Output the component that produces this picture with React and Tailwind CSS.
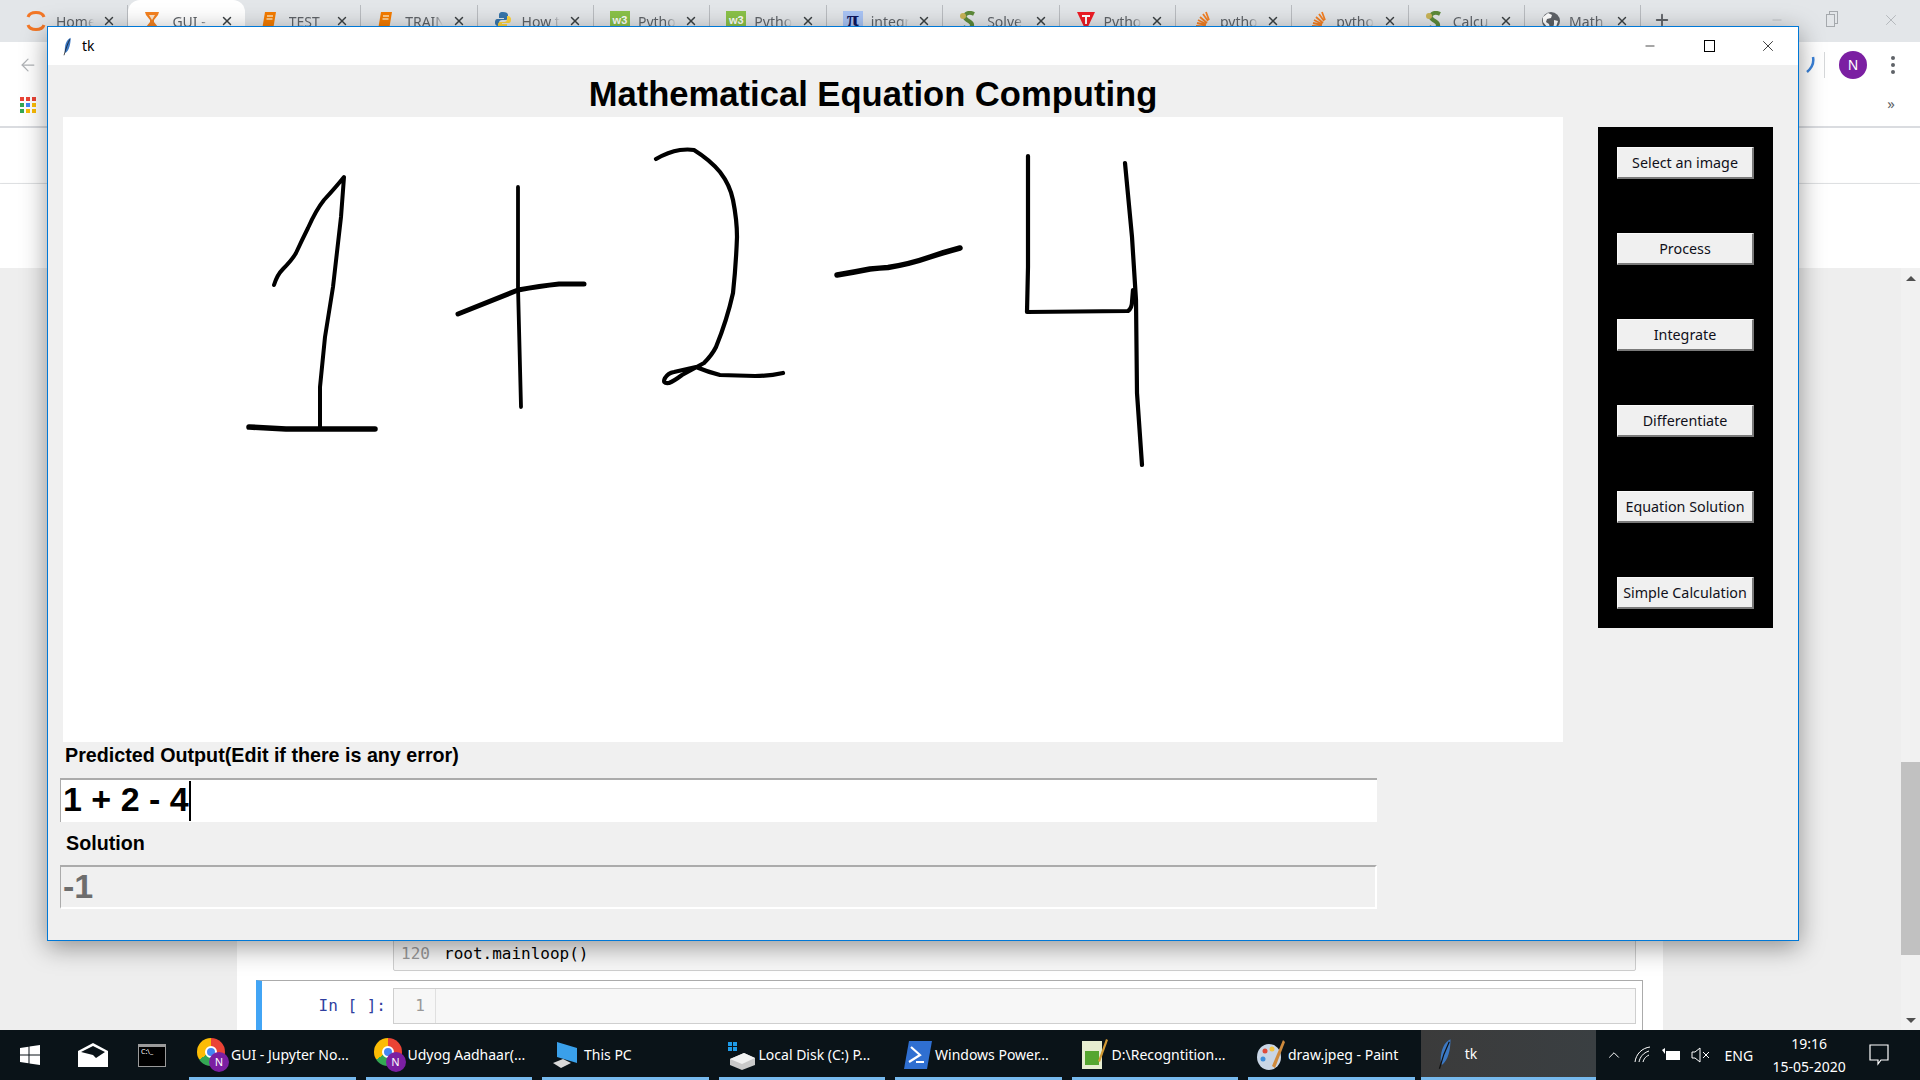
import React from "react";
import { ArrowLeft, ChevronUp, Minus, Plus, X } from "lucide-react";

const SANS = "font-['Liberation_Sans',Arial,sans-serif]";
const UI = "font-['Noto_Sans',sans-serif]";
const MONO = "font-['DejaVu_Sans_Mono',monospace]";

/* ================= FAVICONS ================= */
const JupyterIcon = () => (
  <svg width="22" height="24" viewBox="0 0 22 24" fill="none" stroke="#f37726" strokeWidth="3" className="-ml-[3px]">
    <path d="M3 8C5 2 17 2 19 8" />
    <path d="M3 16C5 22 17 22 19 16" />
  </svg>
);

const HourglassIcon = () => (
  <svg width="16" height="20" viewBox="0 0 16 20">
    <path d="M1 1h14l-1 3-4 5v2l4 5 1 3H1l1-3 4-5V9L2 4z" fill="#f58220" />
    <path d="M5 4h6l-3 5z" fill="#fde3c8" />
  </svg>
);

const BookIcon = () => (
  <svg width="16" height="20" viewBox="0 0 16 20">
    <path d="M4 1h11l-3 18H1z" fill="#f57c00" />
    <path d="M6 5h6M5.500 8h6" stroke="#ffe0b2" strokeWidth="1.500" />
  </svg>
);

const PythonIcon = () => (
  <svg width="18" height="20" viewBox="0 0 18 20">
    <path d="M9 1C5 1 5 3 5 5v2h5v1H3C1 8 1 11 1 12s1 3 3 3h1v-3c0-2 1-3 3-3h4c1 0 2-1 2-2V4c0-2-2-3-5-3z" fill="#3776ab" />
    <path d="M9 19c4 0 4-2 4-4v-2H8v-1h7c2 0 2-3 2-4s-1-3-3-3h-1v3c0 2-1 3-3 3H6c-1 0-2 1-2 2v3c0 2 2 3 5 3z" fill="#ffd43b" />
  </svg>
);

const W3Icon = () => (
  <div className={`w-[20px] h-[20px] bg-[#8ac249] text-white text-[11px] font-bold leading-[18px] text-center ${SANS}`}>w3</div>
);

const PiIcon = () => (
  <div className="w-[20px] h-[20px] bg-[#a9c4f5] text-[#101a60] text-[22px] font-bold leading-[16px] text-center font-['Liberation_Serif',serif]">π</div>
);

const SnakeIcon = () => (
  <svg width="20" height="20" viewBox="0 0 20 20">
    <path d="M15 3C9 0 3 4 7 8c3 3 7 3 6 7-1 3-6 3-9 1" fill="none" stroke="#5d8a3a" strokeWidth="4" />
    <circle cx="4" cy="5" r="3" fill="#c9b458" />
  </svg>
);

const TriangleIcon = () => (
  <svg width="20" height="20" viewBox="0 0 20 20">
    <path d="M1 1h18L10 20z" fill="#ee1c25" />
    <path d="M6 4h8v2h-3v7H9V6H6z" fill="#fff" />
  </svg>
);

const StackIcon = () => (
  <svg width="18" height="20" viewBox="0 0 18 20" fill="none" stroke="#f48024" strokeWidth="1.800">
    <path d="M4 18h9" stroke="#bcbbbb" />
    <path d="M4 15l9 .5M5 12l9 2M6 9l8 4M8 6l7 6M11 3l5 7M14 1l3 8" />
  </svg>
);

const GlobeIcon = () => (
  <svg width="20" height="20" viewBox="0 0 20 20">
    <circle cx="10" cy="10" r="9" fill="#5f6368" />
    <path d="M7 2l4 2-1 3-4 1-1 3 3 2 1 4-3-1-4-5V6zM13 9l4 1-2 6-3 1 1-4z" fill="#fff" />
  </svg>
);

const TABS = [
  { title: "Home", Icon: JupyterIcon },
  { title: "GUI -", Icon: HourglassIcon, active: true },
  { title: "TEST", Icon: BookIcon },
  { title: "TRAIN", Icon: BookIcon },
  { title: "How t", Icon: PythonIcon },
  { title: "Pytho", Icon: W3Icon },
  { title: "Pytho", Icon: W3Icon },
  { title: "integr", Icon: PiIcon },
  { title: "Solve", Icon: SnakeIcon },
  { title: "Pytho", Icon: TriangleIcon },
  { title: "pytho", Icon: StackIcon },
  { title: "pytho", Icon: StackIcon },
  { title: "Calcu", Icon: SnakeIcon },
  { title: "Math", Icon: GlobeIcon },
];

function Tab({ title, Icon, active }) {
  return (
    <div
      className={`w-[116.400px] shrink-0 flex items-center pl-[16px] ${
        active ? "h-[42px] bg-white rounded-t-[12px]" : "h-[32px] mt-[5px] border-r border-[#b9bcc0]"
      }`}
    >
      <div className="w-[28px] flex justify-start shrink-0">
        <Icon />
      </div>
      <span className={`w-[38px] overflow-hidden whitespace-nowrap text-[14px] text-[#5f6368] [mask-image:linear-gradient(to_right,black_75%,transparent)] ${UI}`}>
        {title}
      </span>
      <X size={14} strokeWidth={2.500} className="ml-auto mr-[11px] text-[#3c4043]" />
    </div>
  );
}

/* ================= HANDWRITING ================= */
function Drawing() {
  const strokes = [
    ["M274 285Q277 275 283 269Q292 260 296 253Q302 240 308 228Q316 210 324 200Q336 187 344 177L341 217L333 287L325 337L320 387L320 428", 4],
    ["M249 427L286 429L318 429L375 429", 5.500],
    ["M518 187L518 287L521 407", 3.800],
    ["M458 314L518 290Q540 286 559 284L584 284", 5],
    ["M656 159Q668 152 680 150Q688 149 694 150Q710 160 720 172Q730 185 733 200Q737 220 737 237Q736 265 733 293Q727 320 716 347Q712 355 704 363L682 375Q674 381 669 383Q662 384 665 378Q668 373 674 372L696 367Q708 372 720 375L755 376Q770 376 783 373", 4.200],
    ["M837 275Q855 272 870 269Q880 268 888 267.500Q910 264 930 257Q945 252 960 248", 5.500],
    ["M1028 156L1028 267L1027 312L1128 311Q1132 308 1132 302L1133 290", 4.200],
    ["M1125 163L1132 237L1136 300L1137 393L1142 465", 4.200],
  ];
  return (
    <svg viewBox="63 117 1500 625" className="block w-[1500px] h-[625px] bg-white" fill="none" stroke="#000" strokeLinecap="round" strokeLinejoin="round">
      {strokes.map(([d, w]) => (
        <path key={d} d={d} strokeWidth={w} />
      ))}
    </svg>
  );
}

/* ================= TK WINDOW ================= */
const BUTTONS = ["Select an image", "Process", "Integrate", "Differentiate", "Equation Solution", "Simple Calculation"];

function TkFeather({ size = 26 }) {
  return (
    <svg width={size * 0.6} height={size} viewBox="0 0 12 26">
      <path d="M10 1C5 3 2 10 2 18c0 2 .5 3 1 4 5-4 7-12 7-21z" fill="#3b78c4" />
      <path d="M9 3C6 9 3 17 1 25" stroke="#111" strokeWidth="1" fill="none" />
    </svg>
  );
}

function TkWindow() {
  return (
    <div className="absolute left-[47px] top-[26px] w-[1752px] h-[915px] border border-[#0078d7] bg-[#f0f0f0] shadow-[0_6px_24px_rgba(0,0,0,0.4)] flex flex-col">
      <div className="h-[38px] bg-white flex items-center shrink-0">
        <div className="ml-[14px] w-[20px]">
          <TkFeather size={19} />
        </div>
        <span className={`text-[14px] text-black pb-[1px] ${UI}`}>tk</span>
        <div className="ml-auto flex items-center text-black">
          <Minus size={14} strokeWidth={1.200} className="mr-[47px]" />
          <div className="w-[11px] h-[12px] border border-black mr-[44px]" />
          <X size={18} strokeWidth={1} className="mr-[21px]" />
        </div>
      </div>

      <div className="h-[52px] shrink-0 flex items-center justify-center w-[1650px] pt-[7px]">
        <h1 className={`text-[34.600px] font-bold text-black leading-none ${SANS}`}>Mathematical Equation Computing</h1>
      </div>

      <div className="flex">
        <div className="ml-[15px] w-[1500px]">
          <Drawing />
          <div className={`h-[36px] flex items-center pl-[2px] pb-[8px] text-[19.700px] font-bold text-black ${SANS}`}>
            Predicted Output(Edit if there is any error)
          </div>
          <div className={`-ml-[3px] w-[1317px] h-[44px] bg-white border-t-2 border-l border-t-[#ababab] border-l-[#ababab] flex items-center pl-[2px] pb-[4px] text-[34px] font-bold text-black ${SANS}`}>
            1 + 2 - 4
            <span className="w-[2px] h-[40px] bg-black mt-[4px]" />
          </div>
          <div className={`h-[43px] flex items-center pl-[3px] text-[19.700px] font-bold text-black ${SANS}`}>Solution</div>
          <div className={`-ml-[3px] w-[1317px] h-[44px] border-2 border-t-[#ababab] border-l-[#ababab] border-l border-r-white border-b-white flex items-center pl-[2px] pb-[2px] text-[34px] font-bold text-[#6d6d6d] ${SANS}`}>
            -1
          </div>
        </div>

        <div className="ml-[35px] mt-[10px] w-[175px] h-[501px] bg-black flex flex-col gap-[54.100px] pt-[20px] px-[19px]">
          {BUTTONS.map((b) => (
            <button
              key={b}
              className={`w-[137px] h-[32px] shrink-0 bg-[#f0f0f0] border border-[#fafafa] border-r-2 border-b-2 border-r-[#7a7a7a] border-b-[#7a7a7a] text-[14.300px] text-[#10101a] ${UI}`}
            >
              {b}
            </button>
          ))}
        </div>
      </div>
    </div>
  );
}

/* ================= TASKBAR ================= */
const ChromeNIcon = () => (
  <div className="relative w-[32px] h-[38px] shrink-0">
    <div className="absolute left-0 top-[2px] w-[28px] h-[28px] rounded-full bg-[conic-gradient(#ea4335_0_33%,#34a853_33%_66%,#fbbc05_66%_100%)]" />
    <div className="absolute left-[8px] top-[10px] w-[12px] h-[12px] rounded-full bg-[#4285f4] border-2 border-white" />
    <div className={`absolute left-[12px] top-[16px] w-[20px] h-[20px] rounded-full bg-[#7b1fa2] text-white text-[11px] leading-[20px] text-center ${SANS}`}>N</div>
  </div>
);

const PcIcon = () => (
  <svg width="32" height="32" viewBox="0 0 30 32">
    <path d="M6 3l20 6v15L6 18z" fill="#3aa0ea" />
    <path d="M2 24l10-4 8 4-10 5z" fill="#d9d9d9" />
  </svg>
);

const DiskIcon = () => (
  <svg width="30" height="32" viewBox="0 0 30 32">
    <path d="M1 3h4v4H1zM6 3h4v4H6zM1 8h4v4H1zM6 8h4v4H6z" fill="#1e9be8" />
    <path d="M3 20l14-6 11 5v7l-13 5-12-5z" fill="#c9c9c9" />
    <path d="M3 20l12 5 13-6-11-5z" fill="#f1f1f1" />
  </svg>
);

const PowerShellIcon = () => (
  <svg width="30" height="32" viewBox="0 0 30 32">
    <path d="M6 2h23l-5 28H1z" fill="#2f6fd1" />
    <path d="M8 8l9 8-11 7M13 23h8" fill="none" stroke="#fff" strokeWidth="2.200" />
  </svg>
);

const NotepadIcon = () => (
  <svg width="30" height="34" viewBox="0 0 30 34">
    <path d="M2 3h20v28H2z" fill="#e6edd0" />
    <path d="M5 13h14v14H5z" fill="#55a630" />
    <path d="M26 1l2 1-8 22-2-1z" fill="#d29a34" />
  </svg>
);

const PaintIcon = () => (
  <svg width="30" height="34" viewBox="0 0 30 34">
    <ellipse cx="13" cy="19" rx="12" ry="13" fill="#c9d6e6" />
    <circle cx="9" cy="13" r="2.500" fill="#e04b3a" />
    <circle cx="16" cy="11" r="2.500" fill="#f5c542" />
    <circle cx="7" cy="21" r="2.500" fill="#3f8fdc" />
    <path d="M27 2l2 2-10 26-3-2z" fill="#cf8a3c" />
  </svg>
);

const TASKS = [
  { label: "GUI - Jupyter No...", Icon: ChromeNIcon },
  { label: "Udyog Aadhaar(...", Icon: ChromeNIcon },
  { label: "This PC", Icon: PcIcon },
  { label: "Local Disk (C:) P...", Icon: DiskIcon },
  { label: "Windows Power...", Icon: PowerShellIcon },
  { label: "D:\\Recogntition...", Icon: NotepadIcon },
  { label: "draw.jpeg - Paint", Icon: PaintIcon },
];

function TaskItem({ label, Icon }) {
  return (
    <div className="w-[166.500px] shrink-0 h-full border-b-[3px] border-[#76b9ed] flex items-center pl-[8px] gap-[2px] pt-[2px]">
      <Icon />
      <span className={`text-[14px] text-white whitespace-nowrap ${UI}`}>{label}</span>
    </div>
  );
}

function Taskbar() {
  return (
    <div className="h-[50px] bg-[#0a1318] flex items-stretch shrink-0">
      <div className="w-[189px] shrink-0 flex items-center">
        <svg width="20" height="20" viewBox="0 0 20 20" className="ml-[20px]">
          <path d="M0 3l8.500-1.200V9.500H0zM9.500 1.600L20 0v9.500H9.500zM0 10.500h8.500v7.700L0 17zM9.500 10.500H20V20L9.500 18.400z" fill="#fff" />
        </svg>
        <svg width="30" height="24" viewBox="0 0 30 24" className="ml-[38px]">
          <path d="M0 8L15 0l15 8v16H0z" fill="#fff" />
          <path d="M3 9l12-6 12 6-9 6-3-3z" fill="#0a1318" />
        </svg>
        <div className="ml-[30px] w-[28px] h-[23px] bg-black border border-[#9a9a9a] border-t-[3px] text-[7px] leading-[10px] text-white pl-[2px]">C:\_</div>
      </div>
      <div className="flex gap-[10px]">
        {TASKS.map((t) => (
          <TaskItem key={t.label} {...t} />
        ))}
      </div>
      <div className="w-[175px] ml-[6px] shrink-0 bg-gradient-to-r from-[#3b3b3b] to-[#3a3f42] border-b-[3px] border-[#76b9ed] flex items-center pl-[15px] gap-[10px]">
        <TkFeather size={32} />
        <span className={`text-[14px] text-white ${UI}`}>tk</span>
      </div>
      <div className={`flex-1 flex items-center text-white ${UI}`}>
        <ChevronUp size={18} strokeWidth={1.300} className="ml-[9px]" />
        <svg width="18" height="18" viewBox="0 0 18 18" fill="none" stroke="#fff" strokeWidth="1" className="ml-[11px]">
          <path d="M1 16C2 8 8 2 16 1M5 16c1-5 4-9 10-11M9 16c1-3 2-5 6-7" />
        </svg>
        <svg width="20" height="16" viewBox="0 0 20 16" className="ml-[9px]">
          <path d="M5 4h14v9H5z" fill="#fff" />
          <path d="M1 3l3-2v6z" fill="#fff" />
        </svg>
        <svg width="20" height="18" viewBox="0 0 20 18" fill="none" stroke="#fff" strokeWidth="1" className="ml-[10px]">
          <path d="M1 6h3l5-4v14l-5-4H1zM12 6l6 6M18 6l-6 6" />
        </svg>
        <span className="text-[14px] ml-[14px]">ENG</span>
        <div className="ml-[17px] w-[78px] flex flex-col items-center text-[14px] leading-[23px]">
          <span>19:16</span>
          <span>15-05-2020</span>
        </div>
        <svg width="20" height="22" viewBox="0 0 20 22" fill="none" stroke="#fff" strokeWidth="1.200" className="ml-[21px]">
          <path d="M1 1h18v15H12l-3 4v-4H1z" />
        </svg>
      </div>
    </div>
  );
}

/* ================= BROWSER BEHIND ================= */
function Browser() {
  return (
    <div className="flex-1 flex flex-col min-h-0">
      <div className="h-[42px] bg-[#e3e6e9] shrink-0 flex items-start">
        <div className="w-[12px] shrink-0" />
        {TABS.map((t, i) => (
          <Tab key={i} {...t} />
        ))}
        <Plus size={18} strokeWidth={2.500} className="mt-[11px] ml-[12px] text-[#5f6368]" />
        <div className="ml-auto flex items-center mt-[11px] text-[#a5a9ad]">
          <Minus size={14} strokeWidth={1} className="mr-[42px]" />
          <div className="w-[9px] h-[13px] border border-[#a5a9ad] mr-[47px] shadow-[3px_-3px_0_-1px_#e3e6e9,3px_-3px_0_0_#a5a9ad]" />
          <X size={18} strokeWidth={1} className="mr-[20px]" />
        </div>
      </div>

      <div className="h-[42px] bg-white shrink-0 flex items-center pt-[4px]">
        <ArrowLeft size={20} strokeWidth={1.500} className="ml-[18px] text-[#b0b3b6]" />
        <svg width="10" height="20" viewBox="0 0 10 20" fill="none" stroke="#3b82d8" strokeWidth="2.500" className="ml-auto mr-[9px]">
          <path d="M8 2c1 5 0 10-6 15" />
        </svg>
        <div className="w-[1px] h-[26px] bg-[#d5d7d9] mr-[14px]" />
        <div className={`w-[28px] h-[28px] rounded-full bg-[#7b1fa2] text-white text-[14px] leading-[28px] text-center mr-[24px] ${SANS}`}>N</div>
        <div className="flex flex-col gap-[3px] mr-[25px]">
          <span className="w-[4px] h-[4px] rounded-full bg-[#5f6368]" />
          <span className="w-[4px] h-[4px] rounded-full bg-[#5f6368]" />
          <span className="w-[4px] h-[4px] rounded-full bg-[#5f6368]" />
        </div>
      </div>

      <div className="h-[44px] bg-white shrink-0 flex items-center border-b-2 border-[#dadce0]">
        <div className="ml-[20px] grid grid-cols-3 gap-[2px] w-[16px]">
          {["#ea4335", "#ea4335", "#ea4335", "#34a853", "#4285f4", "#fbbc05", "#34a853", "#fbbc05", "#fbbc05"].map((c, i) => (
            <span key={i} className="h-[4px]" style={{ background: c }} />
          ))}
        </div>
        <span className={`ml-auto mr-[25px] pb-[3px] text-[15px] text-[#5f6368] ${UI}`}>»</span>
      </div>

      <div className="h-[56px] bg-white shrink-0 border-b border-[#e4e6e8]" />
      <div className="h-[84px] bg-white shrink-0 shadow-[0_1px_3px_rgba(0,0,0,0.15)]" />

      <div className="flex-1 flex min-h-0 bg-[#eeeeee]">
        <div className="flex-1 flex flex-col justify-end min-h-0 pl-[237px] pr-[238px] overflow-hidden">
          <div className="bg-white h-[100px] flex flex-col">
            <div className={`ml-[156px] mr-[27px] h-[41px] bg-[#f7f7f7] border border-[#cfcfcf] rounded-b-[2px] flex items-end pb-[4px] text-[16px] ${MONO}`}>
              <span className="w-[45px] text-right pr-[9px] text-[#999]">120</span>
              <span className="pl-[5px] text-black">root.mainloop()</span>
            </div>
            <div className="mt-[9px] ml-[19px] mr-[20px] flex-1 border-t border-r border-[#ababab] border-l-[6px] border-l-[#42a5f5] flex items-start pt-[7px]">
              <span className={`w-[131px] h-[36px] flex items-center justify-end pr-[7px] text-[16px] text-[#303f9f] ${MONO}`}>In [ ]:</span>
              <div className={`flex-1 h-[36px] mr-[6px] bg-[#f7f7f7] border border-[#cfcfcf] flex items-center text-[16px] ${MONO}`}>
                <span className="w-[42px] text-right pr-[10px] text-[#999] border-r border-[#e0e0e0] h-full leading-[34px]">1</span>
              </div>
            </div>
          </div>
        </div>
        <div className="w-[19px] shrink-0 bg-[#f1f1f1] flex flex-col items-center">
          <div className="mt-[8px] w-0 h-0 border-x-[5px] border-x-transparent border-b-[5px] border-b-[#505050]" />
          <div className="mt-[481px] w-full h-[193px] bg-[#c1c1c1]" />
          <div className="mt-[63px] w-0 h-0 border-x-[5px] border-x-transparent border-t-[5px] border-t-[#505050]" />
        </div>
      </div>
    </div>
  );
}

export default function App() {
  return (
    <div className="relative w-[1920px] h-[1080px] overflow-hidden flex flex-col bg-white">
      <Browser />
      <Taskbar />
      <TkWindow />
    </div>
  );
}
